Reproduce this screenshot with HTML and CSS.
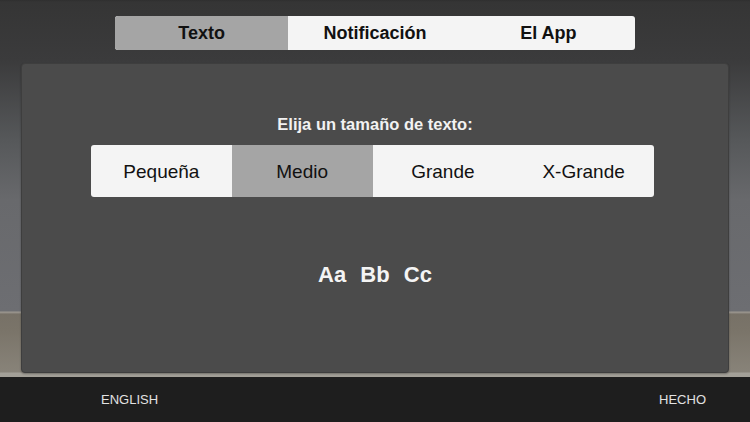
FILE: index.html
```html
<!DOCTYPE html>
<html lang="es">
<head>
    <meta charset="UTF-8">
    <meta name="viewport" content="width=device-width, initial-scale=1.0">
    <title>Ajustes</title>
    <link rel="stylesheet" href="styles.css">
</head>
<body>
    <div class="screen">
        <div class="stage">
            <div class="tabs">
                <div class="tab active">Texto</div>
                <div class="tab">Notificación</div>
                <div class="tab">El App</div>
            </div>

            <div class="panel">
                <h2 class="prompt">Elija un tamaño de texto:</h2>
                <div class="sizes">
                    <div class="size">Pequeña</div>
                    <div class="size active">Medio</div>
                    <div class="size">Grande</div>
                    <div class="size">X-Grande</div>
                </div>
                <div class="sample">Aa Bb Cc</div>
            </div>
        </div>

        <div class="footer">
            <span class="footer-btn">ENGLISH</span>
            <span class="footer-btn">HECHO</span>
        </div>
    </div>
</body>
</html>
```

FILE: styles.css
```css
body {
    margin: 0;
    font-family: 'Liberation Sans', Arial, sans-serif;
    background-color: #1e1e1e;
}

.screen {
    width: 750px;
    height: 422px;
    display: flex;
    flex-direction: column;
    overflow: hidden;
}

.stage {
    height: 377px;
    padding-top: 16px;
    box-sizing: border-box;
    background: linear-gradient(to bottom,
        #2f2f2f 0px,
        #353535 2px,
        #3b3b3c 60px,
        #56585a 140px,
        #68696c 200px,
        #6d6e72 311px,
        #9d9890 312px,
        #8f8a83 313px,
        #777167 314px,
        #7a7469 330px,
        #888379 372px,
        #a3a098 373px,
        #a3a098 377px);
}

.tabs {
    width: 520px;
    height: 34px;
    margin: 0 auto;
    display: flex;
    background-color: #f4f4f4;
    border-radius: 3px;
    overflow: hidden;
}

.tab {
    flex: 1;
    display: flex;
    align-items: center;
    justify-content: center;
    padding-top: 1px;
    font-size: 18px;
    font-weight: bold;
    color: #111;
}

.tab.active {
    background-color: #a5a5a5;
}

.panel {
    height: 310px;
    margin: 13px 21px 0;
    box-sizing: border-box;
    background-color: #4b4b4b;
    border: 1px solid #3e3e3e;
    border-radius: 4px;
    box-shadow: 0 1px 2px rgba(0, 0, 0, 0.3);
    display: flex;
    flex-direction: column;
    align-items: center;
}

.prompt {
    margin: 50px 0 0;
    font-size: 16.5px;
    font-weight: bold;
    color: #f2f2f2;
    line-height: 20px;
}

.sizes {
    width: 563px;
    height: 52px;
    margin-top: 11px;
    margin-left: -5px;
    display: flex;
    background-color: #f4f4f4;
    border-radius: 3px;
    overflow: hidden;
}

.size {
    flex: 1;
    display: flex;
    align-items: center;
    justify-content: center;
    padding-top: 1px;
    font-size: 19px;
    color: #111;
}

.size.active {
    background-color: #a5a5a5;
}

.sample {
    margin-top: 65px;
    font-size: 22px;
    font-weight: bold;
    word-spacing: 8px;
    color: #f4f4f4;
    line-height: 26px;
}

.footer {
    flex: 1;
    display: flex;
    align-items: center;
    justify-content: space-between;
    padding: 0 44px 0 101px;
    background-color: #1e1e1e;
}

.footer-btn {
    font-size: 13px;
    color: #e2e2e2;
}
```
